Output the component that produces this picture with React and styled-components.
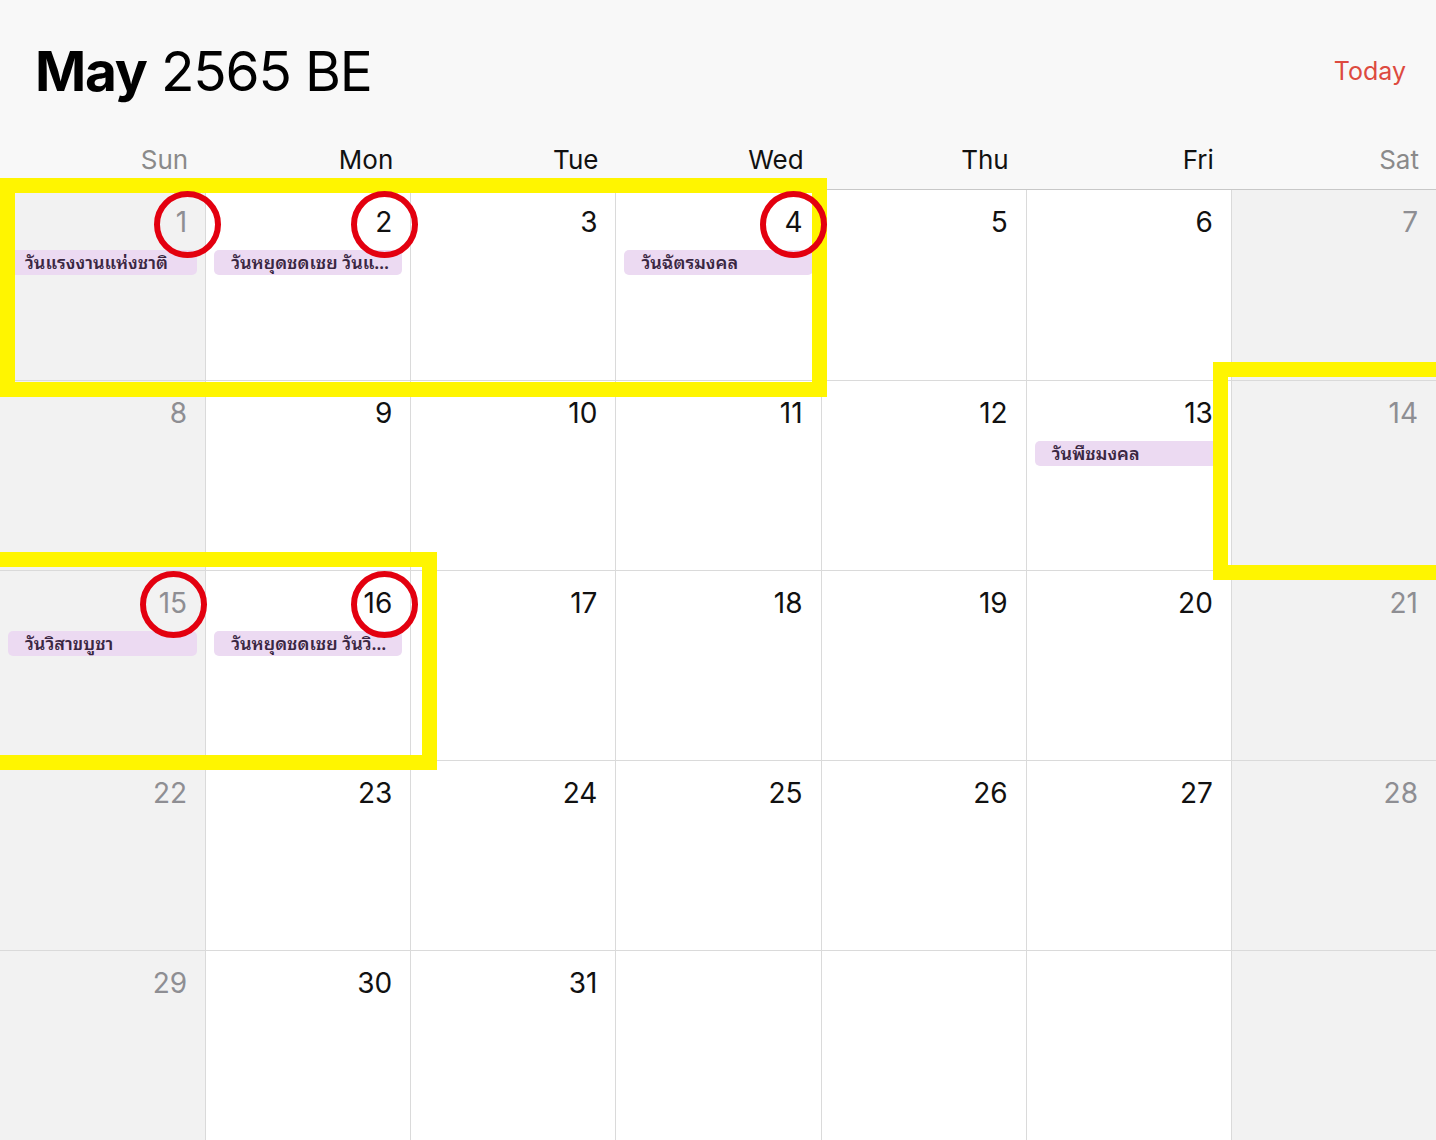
import React from 'react';
import styled, { createGlobalStyle } from 'styled-components';

const GlobalStyle = createGlobalStyle`
  html, body {
    margin: 0;
    padding: 0;
    background: #f8f8f8;
  }
  * {
    box-sizing: border-box;
  }
`;

const weekdays = ['Sun', 'Mon', 'Tue', 'Wed', 'Thu', 'Fri', 'Sat'];

const events = {
  1: 'วันแรงงานแห่งชาติ',
  2: 'วันหยุดชดเชย วันแรงงานแห่งชาติ',
  4: 'วันฉัตรมงคล',
  13: 'วันพืชมงคล',
  15: 'วันวิสาขบูชา',
  16: 'วันหยุดชดเชย วันวิสาขบูชา',
};

const cells = Array.from({ length: 35 }, (_, i) => (i < 31 ? i + 1 : null));

// highlight marks drawn over the calendar
const boxes = [
  { left: 0, top: 178, width: 827, height: 219 },
  { left: 1213, top: 362, width: 250, height: 218 },
  { left: -30, top: 552, width: 467, height: 218 },
];

const circles = [
  { left: 154, top: 191 },
  { left: 351, top: 191 },
  { left: 760, top: 191 },
  { left: 140, top: 571 },
  { left: 351, top: 571 },
];

const App = () => {
  return (
    <Page>
      <GlobalStyle />
      <Header>
        <Title>
          <strong>May</strong> 2565 BE
        </Title>
        <TodayButton>Today</TodayButton>
      </Header>
      <WeekdayRow>
        {weekdays.map((d, i) => (
          <WeekdayLabel key={d} $weekend={i === 0 || i === 6}>{d}</WeekdayLabel>
        ))}
      </WeekdayRow>
      <MonthGrid>
        {cells.map((day, i) => {
          const col = i % 7;
          const weekend = col === 0 || col === 6;
          return (
            <DayCell key={i} $weekend={weekend} $firstCol={col === 0} $firstRow={i < 7}>
              {day && <DayNumber $weekend={weekend}>{day}</DayNumber>}
              {day && events[day] && <EventPill title={events[day]}>{events[day]}</EventPill>}
            </DayCell>
          );
        })}
      </MonthGrid>
      {boxes.map((b, i) => (
        <HighlightBox key={i} style={b} />
      ))}
      {circles.map((c, i) => (
        <HighlightCircle key={i} style={c} />
      ))}
    </Page>
  );
};

export default App;

const Page = styled.div`
  position: relative;
  width: 1436px;
  height: 1140px;
  overflow: hidden;
  background: #f8f8f8;
  font-family: Inter, 'Noto Sans', sans-serif;
  color: #111;
`;

const Header = styled.div`
  height: 142px;
  display: flex;
  align-items: center;
  justify-content: space-between;
  padding: 0 30px 0 35px;
`;

const Title = styled.h1`
  margin: 0;
  font-size: 55px;
  font-weight: 400;
  letter-spacing: -1.2px;
  color: #000;

  strong {
    font-weight: 700;
  }
`;

const TodayButton = styled.div`
  font-size: 25px;
  color: #dd4a3f;
`;

const WeekdayRow = styled.div`
  height: 47px;
  display: grid;
  grid-template-columns: repeat(7, 1fr);
`;

const WeekdayLabel = styled.div`
  text-align: right;
  padding-right: 17px;
  font-size: 26px;
  line-height: 36px;
  color: ${(p) => (p.$weekend ? '#8a8a8a' : '#111')};
`;

const MonthGrid = styled.div`
  display: grid;
  grid-template-columns: repeat(7, 1fr);
  border-top: 1px solid #c8c8c8;
`;

const DayCell = styled.div`
  height: 190px;
  min-width: 0;
  background: ${(p) => (p.$weekend ? '#f2f2f2' : '#ffffff')};
  border-left: ${(p) => (p.$firstCol ? 'none' : '1px solid #dadada')};
  border-top: ${(p) => (p.$firstRow ? 'none' : '1px solid #dadada')};
  padding-top: 15px;
`;

const DayNumber = styled.div`
  text-align: right;
  padding-right: 18px;
  font-size: 28px;
  line-height: 34px;
  color: ${(p) => (p.$weekend ? '#8e8e93' : '#111')};
`;

const EventPill = styled.div`
  margin: 11px 8px 0;
  height: 25px;
  padding: 0 6px 0 17px;
  border-radius: 5px;
  background: #ecdaf2;
  color: #3a2742;
  font-family: 'Noto Sans Thai Looped', 'Noto Looped Thai', 'Tlwg Typo', 'Garuda', 'Loma', 'Noto Sans Thai', 'Noto Sans', sans-serif;
  font-size: 18px;
  font-weight: 600;
  line-height: 23px;
  white-space: nowrap;
  overflow-x: clip;
  overflow-y: visible;
  text-overflow: ellipsis;
`;

const HighlightBox = styled.div`
  position: absolute;
  border: 15px solid #fff500;
`;

const HighlightCircle = styled.div`
  position: absolute;
  width: 67px;
  height: 67px;
  border: 6px solid #e3000f;
  border-radius: 50%;
`;
